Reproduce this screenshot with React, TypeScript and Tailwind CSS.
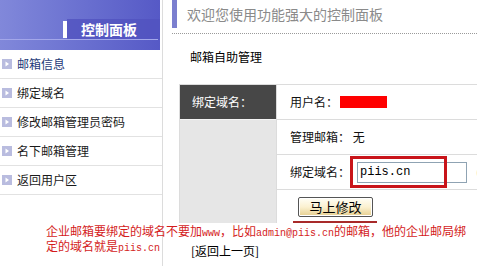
import React from "react";

const cjk = { fontFamily: '"Noto Sans CJK SC", "Noto Sans", sans-serif' };
const mono = { fontFamily: '"Liberation Mono", "Noto Sans CJK SC", monospace' };

function MenuIcon() {
  return (
    <span className="w-[10px] h-[10px] bg-[#b9bcdf] flex items-center justify-center shrink-0">
      <svg width="6" height="6" viewBox="0 0 6 6">
        <path d="M1.5 0.5 L5 3 L1.5 5.5 Z" fill="#ffffff" />
      </svg>
    </span>
  );
}

const items = ["邮箱信息", "绑定域名", "修改邮箱管理员密码", "名下邮箱管理", "返回用户区"];

export default function App() {
  return (
    <div className="relative w-[477px] h-[266px] overflow-hidden bg-white flex text-[12px] text-[#111]" style={cjk}>
      {/* Sidebar */}
      <div className="w-[163px] shrink-0 border-r border-[#dcdcdc] h-full">
        <div className="w-[160px] h-[50px] bg-gradient-to-r from-[#8188da] to-[#5659c6] flex flex-col pt-[19px]">
          <div className="h-[20px] ml-[63px] flex items-center">
            <div className="w-[4px] h-[17px] bg-white" />
            <div className="flex-1 h-full bg-[#5152bf]/80 flex items-center pl-[14px] text-white font-bold text-[14px] leading-none">
              控制面板
            </div>
          </div>
          <div className="w-[158px] h-px bg-[#a3a7ea]" />
        </div>
        <ul>
          {items.map((t, i) => (
            <li
              key={t}
              className={`${i === 0 ? "h-[29px] text-[#1d3a78]" : "h-[29px] text-[#1a1a1a]"} border-b border-[#e2e2e2] flex items-center pl-[2px] gap-[5px] leading-none`}
            >
              <MenuIcon />
              <span>{t}</span>
            </li>
          ))}
        </ul>
      </div>

      {/* Main */}
      <div className="w-[400px] shrink-0 flex flex-col whitespace-nowrap">
        <div className="ml-[9px] h-[34px] border-b border-dotted border-[#9a9a9a] flex items-start">
          <div className="w-[5px] h-[28px] bg-[#7b7fcf]" />
          <div className="ml-[10px] h-[28px] flex items-center text-[14px] text-[#8a8a8a] leading-none">
            欢迎您使用功能强大的控制面板
          </div>
        </div>
        <div className="mt-[15px] pl-[27px] leading-[16px] text-black">邮箱自助管理</div>
        <div className="mt-[19px] ml-[16px] w-[320px] border-t border-l border-[#dcdcdc] flex">
          <div className="w-[96px] shrink-0 flex flex-col">
            <div className="h-[35px] bg-[#474747] border-b border-[#f4f4f4] flex items-center pl-[12px] text-white leading-none">
              绑定域名：
            </div>
            <div className="h-[103px] bg-[#e6e6e6]" />
          </div>
          <div className="flex-1 flex flex-col border-l border-[#dcdcdc]">
            <div className="h-[35px] border-b border-[#dcdcdc] flex items-center pl-[13px] leading-none">
              <span className="shrink-0">用户名：</span>
              <span className="ml-[2px] w-[47px] h-[12px] bg-[#ff0000] shrink-0" />
            </div>
            <div className="h-[35px] border-b border-[#dcdcdc] flex items-center pl-[13px] leading-none">
              管理邮箱：&nbsp;无
            </div>
            <div className="relative h-[35px] border-b border-[#dcdcdc] flex items-center pl-[13px] leading-none">
              <span className="shrink-0">绑定域名：</span>
              <div className="ml-[7px] w-[110px] h-[21px] shrink-0 border border-[#8fa3b3] flex items-center pl-[2px] text-[12px] text-black" style={mono}>
                piis.cn
              </div>
              <span className="ml-[9px] text-[#555] shrink-0">(</span>
              <div className="absolute left-[73px] top-[1px] w-[97px] h-[32px] border-[3px] border-[#c8141a]" />
            </div>
            <div className="relative h-[33px] flex items-center pl-[21px]">
              <button className="w-[75px] h-[20px] shrink-0 border border-[#555] rounded-[2px] bg-gradient-to-b from-[#fffef6] via-[#fbf1d0] to-[#e6cf8e] text-[13px] leading-none text-black shadow-[inset_0_0_0_1px_#fff]">
                马上修改
              </button>
              <div className="absolute left-[16px] bottom-0 w-[84px] h-[2px] bg-[#a82a2a]" />
            </div>
          </div>
        </div>
        <div className="mt-[20px] pl-[28px] leading-[16px] text-black">[返回上一页]</div>
      </div>

      {/* Annotation */}
      <div className="absolute left-[46px] top-[225px] text-[12px] leading-[12px] text-[#d41c1c] whitespace-nowrap">
        企业邮箱要绑定的域名不要加<span className="text-[10px]" style={mono}>www</span>，比如<span className="text-[10px]" style={mono}>admin@piis.cn</span>的邮箱，他的企业邮局绑
        <br />
        定的域名就是<span className="text-[10px]" style={mono}>piis.cn</span>
      </div>
    </div>
  );
}
